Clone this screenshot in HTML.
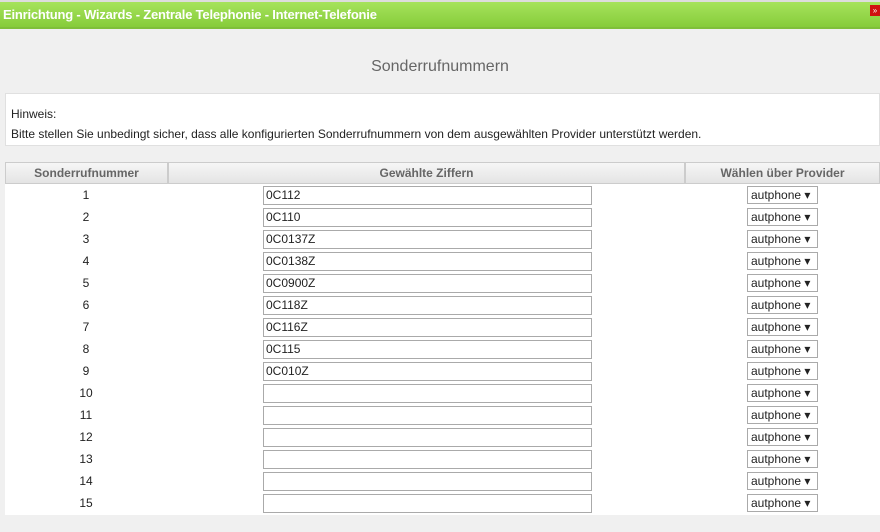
<!DOCTYPE html>
<html><head><style>
*{margin:0;padding:0;box-sizing:border-box}
body{width:880px;height:532px;background:#f0f0f0;font-family:"Liberation Sans",Arial,sans-serif;font-size:12px;color:#222;position:relative;overflow:hidden}
.tb{position:absolute;left:0;top:0;width:880px;height:29px;background:linear-gradient(#a6e35c,#86cc3a);border-top:2px solid #ddd;border-bottom:2px solid #7fbf3a}
.tb span{position:absolute;left:3px;top:5px;color:#fff;font-size:13px;font-weight:bold;letter-spacing:-0.2px}
.x{position:absolute;right:0;top:3px;width:10px;height:11px;background:#d01010;color:#fff;font-size:8px;line-height:11px;text-align:center}
h1{position:absolute;top:58px;left:0;width:880px;text-align:center;font-weight:normal;font-size:16px;color:#666}
.hint{position:absolute;left:5px;top:93px;width:875px;height:53px;background:#fff;border:1px solid #e0e0e0}
.hint p{position:absolute;left:5px;font-size:12px;color:#222}
.hd{position:absolute;top:162px;height:22px;background:linear-gradient(#f6f6f6,#e4e4e4);border:1px solid #ccc;color:#666;font-weight:bold;text-align:center;line-height:20px}
.rows{position:absolute;left:5px;top:184px;width:875px;height:331px;background:#fff}
.r{position:absolute;left:0;width:875px;height:22px}
.n{position:absolute;left:0;width:162px;text-align:center;top:4px}
.i{position:absolute;left:258px;top:2px;width:329px;height:19px;border:1px solid #aaa;padding-left:2px;line-height:17px}
.s{position:absolute;left:742px;top:2px;width:71px;height:18px;border:1px solid #aaa;padding-left:3px;line-height:16px}
</style></head><body>
<div class="tb"><span>Einrichtung - Wizards - Zentrale Telephonie - Internet-Telefonie</span><div class="x">»</div></div>
<h1>Sonderrufnummern</h1>
<div class="hint"><p style="top:13px">Hinweis:</p><p style="top:33px">Bitte stellen Sie unbedingt sicher, dass alle konfigurierten Sonderrufnummern von dem ausgewählten Provider unterstützt werden.</p></div>
<div class="hd" style="left:5px;width:163px">Sonderrufnummer</div>
<div class="hd" style="left:168px;width:517px">Gewählte Ziffern</div>
<div class="hd" style="left:685px;width:195px">Wählen über Provider</div>
<div class="rows">
<div class="r" style="top:0"><div class="n">1</div><div class="i">0C112</div><div class="s">autphone ▾</div></div>
<div class="r" style="top:22px"><div class="n">2</div><div class="i">0C110</div><div class="s">autphone ▾</div></div>
<div class="r" style="top:44px"><div class="n">3</div><div class="i">0C0137Z</div><div class="s">autphone ▾</div></div>
<div class="r" style="top:66px"><div class="n">4</div><div class="i">0C0138Z</div><div class="s">autphone ▾</div></div>
<div class="r" style="top:88px"><div class="n">5</div><div class="i">0C0900Z</div><div class="s">autphone ▾</div></div>
<div class="r" style="top:110px"><div class="n">6</div><div class="i">0C118Z</div><div class="s">autphone ▾</div></div>
<div class="r" style="top:132px"><div class="n">7</div><div class="i">0C116Z</div><div class="s">autphone ▾</div></div>
<div class="r" style="top:154px"><div class="n">8</div><div class="i">0C115</div><div class="s">autphone ▾</div></div>
<div class="r" style="top:176px"><div class="n">9</div><div class="i">0C010Z</div><div class="s">autphone ▾</div></div>
<div class="r" style="top:198px"><div class="n">10</div><div class="i"></div><div class="s">autphone ▾</div></div>
<div class="r" style="top:220px"><div class="n">11</div><div class="i"></div><div class="s">autphone ▾</div></div>
<div class="r" style="top:242px"><div class="n">12</div><div class="i"></div><div class="s">autphone ▾</div></div>
<div class="r" style="top:264px"><div class="n">13</div><div class="i"></div><div class="s">autphone ▾</div></div>
<div class="r" style="top:286px"><div class="n">14</div><div class="i"></div><div class="s">autphone ▾</div></div>
<div class="r" style="top:308px"><div class="n">15</div><div class="i"></div><div class="s">autphone ▾</div></div>
</div>
</body></html>
